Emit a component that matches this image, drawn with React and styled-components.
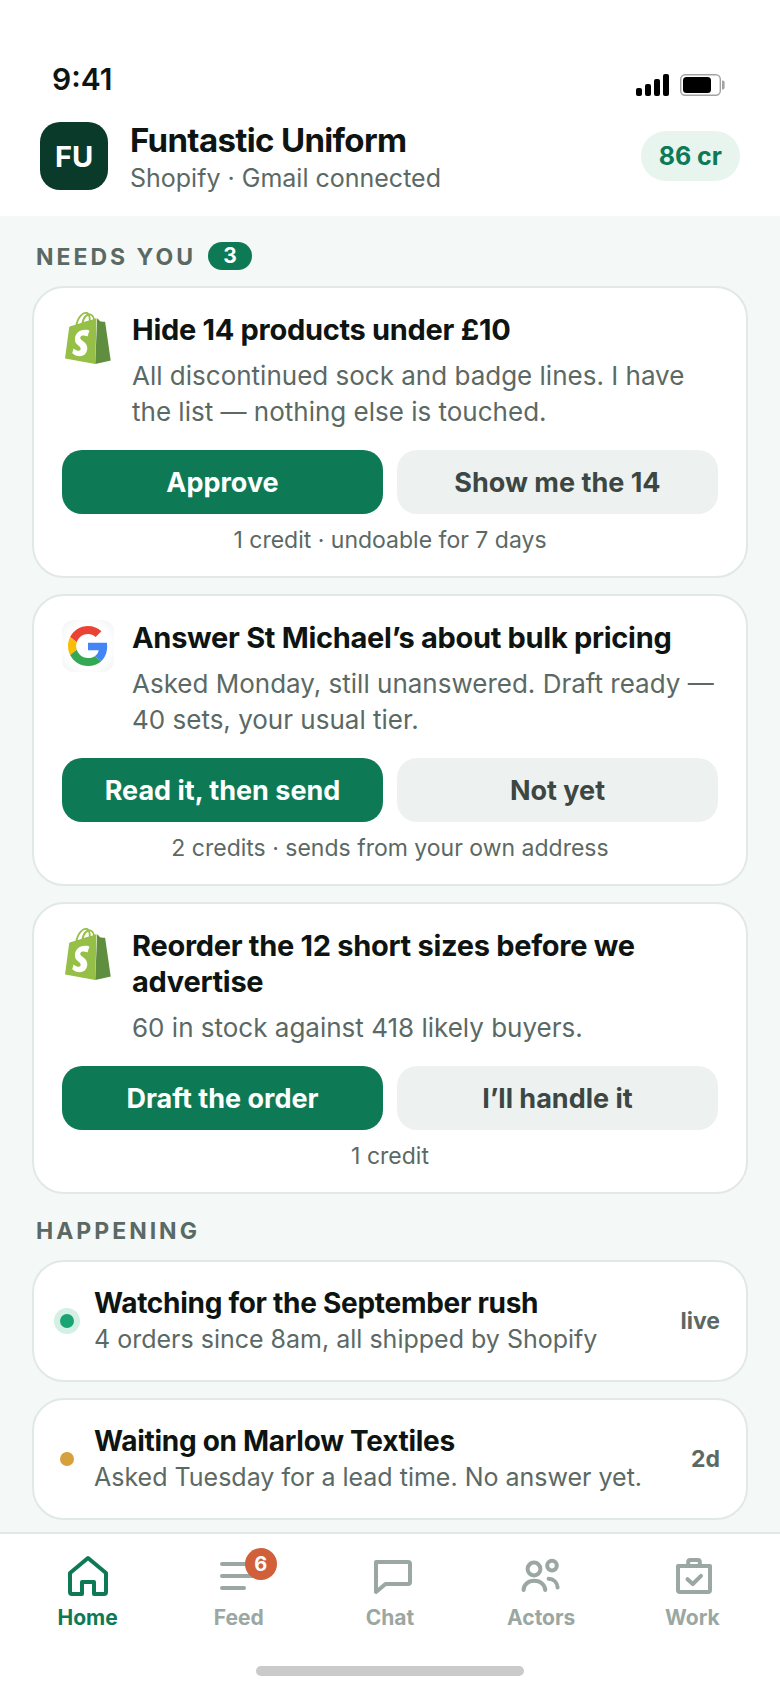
import React from "react";
import styled, { createGlobalStyle, css } from "styled-components";

const needs = [
  {
    id: 1,
    source: "shopify",
    title: "Hide 14 products under £10",
    desc: "All discontinued sock and badge lines. I have the list — nothing else is touched.",
    primary: "Approve",
    secondary: "Show me the 14",
    note: "1 credit · undoable for 7 days",
  },
  {
    id: 2,
    source: "google",
    title: "Answer St Michael’s about bulk pricing",
    desc: "Asked Monday, still unanswered. Draft ready — 40 sets, your usual tier.",
    primary: "Read it, then send",
    secondary: "Not yet",
    note: "2 credits · sends from your own address",
  },
  {
    id: 3,
    source: "shopify",
    title: "Reorder the 12 short sizes before we advertise",
    desc: "60 in stock against 418 likely buyers.",
    primary: "Draft the order",
    secondary: "I’ll handle it",
    note: "1 credit",
  },
];

const happenings = [
  {
    id: 1,
    live: true,
    title: "Watching for the September rush",
    desc: "4 orders since 8am, all shipped by Shopify",
    state: "live",
  },
  {
    id: 2,
    live: false,
    title: "Waiting on Marlow Textiles",
    desc: "Asked Tuesday for a lead time. No answer yet.",
    state: "2d",
  },
];

const tabs = [
  {
    name: "Home",
    active: true,
    icon: (
      <path d="M6 21 24 6l18 15v19a2 2 0 0 1-2 2H30V30H18v12H8a2 2 0 0 1-2-2z" />
    ),
  },
  { name: "Feed", count: 6, icon: <path d="M7 12h34M7 24h34M7 36h22" /> },
  {
    name: "Chat",
    icon: (
      <path d="M10 10h32a2 2 0 0 1 2 2v18a2 2 0 0 1-2 2H19.5L10 40z" />
    ),
  },
  {
    name: "Actors",
    icon: (
      <>
        <circle cx="17" cy="17" r="6.4" />
        <circle cx="35" cy="13.6" r="4.8" />
        <path d="M6.6 38c0-5.2 4.4-9.2 10.6-9.2s11 4 11 9.2M31.6 26.8c5 .2 8.6 3.8 9 8.6" />
      </>
    ),
  },
  {
    name: "Work",
    icon: (
      <>
        <path d="M10 14h32v24a2 2 0 0 1-2 2H12a2 2 0 0 1-2-2z" />
        <path d="M20.2 14v-4a2 2 0 0 1 2-2h7.6a2 2 0 0 1 2 2v4M19.5 27.2l5.3 4.8 8.2-8.2" />
      </>
    ),
  },
];

const ShopifyLogo = () => (
  <svg width="52" height="52" viewBox="0 0 24 24" aria-label="Shopify" role="img">
    <path
      fill="#5e8e3e"
      d="M15.337 23.979l7.216-1.561s-2.604-17.613-2.625-17.73c-.018-.116-.114-.192-.211-.192s-1.929-.136-1.929-.136-1.275-1.274-1.439-1.411c-.045-.037-.075-.057-.121-.074l-.914 21.104z"
    />
    <path
      fill="#95bf47"
      fillRule="evenodd"
      d="M11.71 11.305s-.81-.424-1.774-.424c-1.447 0-1.504.906-1.504 1.141 0 1.232 3.24 1.715 3.24 4.629 0 2.295-1.44 3.76-3.406 3.76-2.354 0-3.54-1.465-3.54-1.465l.646-2.086s1.245 1.066 2.28 1.066c.675 0 .975-.545.975-.932 0-1.619-2.654-1.694-2.654-4.359-.034-2.237 1.571-4.416 4.827-4.416 1.257 0 1.875.361 1.875.361l-.945 2.715zM11.17.83c.136 0 .271.038.405.135-.984.465-2.064 1.639-2.508 3.992-.656.213-1.293.405-1.889.578C7.697 3.75 8.951.84 11.17.84zM12.405 3.779v.135c-.754.232-1.583.484-2.394.736.466-1.777 1.333-2.645 2.085-2.971.193.501.309 1.176.309 2.1zM12.944 1.545c.694.074 1.141.867 1.429 1.755-.349.114-.735.231-1.158.366v-.252c0-.752-.096-1.371-.271-1.871zM15.936 2.834c-.02 0-.06.021-.078.021s-.289.075-.714.21c-.423-1.233-1.176-2.37-2.508-2.37h-.115C12.135.209 11.669 0 11.265 0 8.159 0 6.675 3.877 6.21 5.846c-1.194.365-2.063.636-2.16.674-.675.213-.694.232-.772.87-.075.462-1.83 14.063-1.83 14.063L15.35 24l.586-21.166z"
    />
  </svg>
);

const GoogleLogo = () => (
  <svg width="40" height="40" viewBox="0 0 48 48" aria-label="Google" role="img">
    <path
      fill="#ea4335"
      d="M24 9.5c3.54 0 6.71 1.22 9.21 3.6l6.85-6.85C35.9 2.38 30.47 0 24 0 14.62 0 6.51 5.38 2.56 13.22l7.98 6.19C12.43 13.72 17.74 9.5 24 9.5z"
    />
    <path
      fill="#4285f4"
      d="M46.98 24.55c0-1.57-.15-3.09-.38-4.55H24v9.02h12.94c-.58 2.96-2.26 5.48-4.78 7.18l7.73 6c4.51-4.18 7.09-10.36 7.09-17.65z"
    />
    <path
      fill="#fbbc05"
      d="M10.53 28.59c-.48-1.45-.76-2.99-.76-4.59s.27-3.14.76-4.59l-7.98-6.19C.92 16.46 0 20.12 0 24c0 3.88.92 7.54 2.56 10.78l7.97-6.19z"
    />
    <path
      fill="#34a853"
      d="M24 48c6.48 0 11.93-2.13 15.89-5.81l-7.73-6c-2.15 1.45-4.92 2.3-8.16 2.3-6.26 0-11.57-4.22-13.47-9.91l-7.98 6.19C6.51 42.62 14.62 48 24 48z"
    />
  </svg>
);

const NeedCard = (props) => {
  return (
    <Card>
      <CardTop>
        {props.source === "shopify" ? (
          <ShopifyLogo />
        ) : (
          <GoogleTile>
            <GoogleLogo />
          </GoogleTile>
        )}
        <CardText>
          <CardTitle>{props.title}</CardTitle>
          <CardDesc>{props.desc}</CardDesc>
        </CardText>
      </CardTop>
      <BtnBox>
        <Btn type="button" $primary>{props.primary}</Btn>
        <Btn type="button">{props.secondary}</Btn>
      </BtnBox>
      <Note>{props.note}</Note>
    </Card>
  );
};

const HappeningRow = (props) => {
  return (
    <Row>
      <Dot $live={props.live} />
      <RowText>
        <RowTitle>{props.title}</RowTitle>
        <RowDesc>{props.desc}</RowDesc>
      </RowText>
      <RowState>{props.state}</RowState>
    </Row>
  );
};

const App = () => {
  return (
    <Page>
      <GlobalStyle />
      <StatusBar>
        <Clock>9:41</Clock>
        <svg width="90" height="22" viewBox="0 0 90 22" aria-hidden="true">
          <rect x="0" y="14" width="6" height="8" rx="2" />
          <rect x="9" y="10" width="6" height="12" rx="2" />
          <rect x="18" y="5" width="6" height="17" rx="2" />
          <rect x="27" y="0" width="6" height="22" rx="2" />
          <rect x="44.7" y=".7" width="39.6" height="20.6" rx="4.5" fill="none" stroke="#a3a3a3" strokeWidth="1.4" />
          <rect x="47" y="3" width="28" height="16" rx="3.5" />
          <path d="M86 6.5h.6a2 2 0 0 1 2 2v5a2 2 0 0 1-2 2H86z" fill="#a3a3a3" />
        </svg>
      </StatusBar>
      <Header>
        <Avatar>FU</Avatar>
        <ShopInfo>
          <ShopName>Funtastic Uniform</ShopName>
          <ShopDesc>Shopify · Gmail connected</ShopDesc>
        </ShopInfo>
        <Credits>86 cr</Credits>
      </Header>

      <Main>
        <SectionTitle>
          NEEDS YOU <Count>3</Count>
        </SectionTitle>
        <List>
          {needs.map((n) => (
            <NeedCard key={n.id} {...n} />
          ))}
        </List>
        <SectionTitle>HAPPENING</SectionTitle>
        <List>
          {happenings.map((h) => (
            <HappeningRow key={h.id} {...h} />
          ))}
        </List>
      </Main>

      <TabBar>
        <TabList>
          {tabs.map((t) => (
            <Tab key={t.name} href={`#${t.name.toLowerCase()}`} $active={t.active}>
              <TabIcon>
                <svg width="48" height="48" viewBox="0 0 48 48" aria-hidden="true">
                  {t.icon}
                </svg>
                {t.count && <TabBadge>{t.count}</TabBadge>}
              </TabIcon>
              {t.name}
            </Tab>
          ))}
        </TabList>
        <HomeIndicator />
      </TabBar>
    </Page>
  );
};

export default App;

const GlobalStyle = createGlobalStyle`
  * {
    box-sizing: border-box;
  }
  body {
    margin: 0;
    background-color: #f4f8f7;
    color: #0e1412;
    font-family: Inter, "Liberation Sans", sans-serif;
  }
  h1, h2, h3, p {
    margin: 0;
  }
`;

const cardBox = css`
  background-color: #ffffff;
  border: 2px solid #e1e9e6;
  border-radius: 32px;
`;

const Page = styled.div`
  min-height: 100vh;
  display: flex;
  flex-direction: column;
`;

const StatusBar = styled.div`
  display: flex;
  align-items: flex-end;
  justify-content: space-between;
  padding: 62px 54px 21px 52px;
  background-color: #ffffff;
`;

const Clock = styled.span`
  font-size: 30px;
  line-height: 34px;
  font-weight: 600;
`;

const Header = styled.header`
  display: flex;
  align-items: center;
  gap: 22px;
  padding: 0 40px 21px;
  background-color: #ffffff;
`;

const Avatar = styled.div`
  display: flex;
  align-items: center;
  justify-content: center;
  width: 68px;
  height: 68px;
  border-radius: 20px;
  background-color: #0a3b2a;
  color: #ffffff;
  font-size: 29px;
  font-weight: 700;
`;

const ShopInfo = styled.div`
  flex: 1;
  padding-top: 6px;
`;

const ShopName = styled.h1`
  font-size: 33px;
  line-height: 34px;
  font-weight: 700;
  letter-spacing: -0.02em;
`;

const ShopDesc = styled.p`
  margin-top: 4px;
  font-size: 25px;
  line-height: 34px;
  color: #5b6965;
`;

const Credits = styled.span`
  padding: 10px 18px;
  border-radius: 25px;
  background-color: #e8f4ee;
  color: #0e7a55;
  font-size: 25px;
  line-height: 30px;
  font-weight: 700;
`;

const Main = styled.main`
  flex: 1;
  padding: 4px 32px 12px;
`;

const SectionTitle = styled.h2`
  display: flex;
  align-items: flex-start;
  gap: 12px;
  margin: 22px 4px 14px;
  font-size: 23px;
  line-height: 30px;
  font-weight: 700;
  letter-spacing: 3px;
  color: #5b6965;
`;

const Count = styled.span`
  min-width: 44px;
  border-radius: 14px;
  background-color: #0e7a55;
  color: #ffffff;
  font-size: 21px;
  line-height: 28px;
  text-align: center;
  letter-spacing: normal;
`;

const List = styled.div`
  display: flex;
  flex-direction: column;
  gap: 16px;
`;

const Card = styled.article`
  ${cardBox}
  padding: 24px 28px 22px;
`;

const CardTop = styled.div`
  display: flex;
  align-items: flex-start;
  gap: 18px;

  & > svg {
    flex-shrink: 0;
  }
`;

const GoogleTile = styled.div`
  display: flex;
  align-items: center;
  justify-content: center;
  flex-shrink: 0;
  width: 52px;
  height: 52px;
  border-radius: 12px;
  background: radial-gradient(circle, #ffffff 60%, #eef1f0);
`;

const CardText = styled.div`
  flex: 1;
`;

const CardTitle = styled.h3`
  font-size: 29px;
  line-height: 36px;
  font-weight: 700;
  letter-spacing: -0.01em;
`;

const CardDesc = styled.p`
  margin-top: 10px;
  font-size: 26px;
  line-height: 36px;
  color: #5b6965;
`;

const BtnBox = styled.div`
  display: grid;
  grid-template-columns: 1fr 1fr;
  gap: 14px;
  margin-top: 20px;
`;

const Btn = styled.button`
  height: 64px;
  border: none;
  border-radius: 20px;
  background-color: ${(props) => (props.$primary ? "#0e7a55" : "#edf2f1")};
  color: ${(props) => (props.$primary ? "#ffffff" : "#3c4744")};
  font-family: inherit;
  font-size: 27px;
  font-weight: 700;
  cursor: pointer;
`;

const Note = styled.p`
  margin-top: 12px;
  font-size: 23px;
  line-height: 28px;
  text-align: center;
  color: #5b6965;
`;

const Row = styled.article`
  ${cardBox}
  display: flex;
  align-items: center;
  gap: 20px;
  min-height: 122px;
  padding: 22px 26px;
`;

const Dot = styled.span`
  width: 14px;
  height: 14px;
  border-radius: 50%;
  background-color: ${(props) => (props.$live ? "#1aa374" : "#d6a03c")};
  box-shadow: ${(props) => (props.$live ? "0 0 0 6px #d4efe4" : "none")};
`;

const RowText = styled.div`
  flex: 1;
`;

const RowTitle = styled.h3`
  font-size: 28px;
  line-height: 36px;
  font-weight: 700;
  letter-spacing: -0.01em;
`;

const RowDesc = styled.p`
  font-size: 25px;
  line-height: 36px;
  color: #5b6965;
`;

const RowState = styled.span`
  font-size: 23px;
  font-weight: 700;
  color: #5b6965;
`;

const TabBar = styled.nav`
  padding: 18px 12px 12px;
  border-top: 2px solid #e1e9e6;
  background-color: #ffffff;
`;

const TabList = styled.div`
  display: grid;
  grid-template-columns: repeat(5, 1fr);
`;

const Tab = styled.a`
  display: flex;
  flex-direction: column;
  align-items: center;
  gap: 4px;
  color: ${(props) => (props.$active ? "#0e7a55" : "#9aa7a2")};
  font-size: 21px;
  line-height: 28px;
  font-weight: 700;
  text-decoration: none;

  svg {
    display: block;
    fill: none;
    stroke: currentColor;
    stroke-width: 4;
    stroke-linecap: round;
    stroke-linejoin: round;
  }
`;

const TabIcon = styled.span`
  position: relative;
`;

const TabBadge = styled.span`
  position: absolute;
  top: -4px;
  right: -14px;
  width: 32px;
  height: 32px;
  border-radius: 50%;
  background-color: #d05f3a;
  color: #ffffff;
  font-size: 20px;
  line-height: 33px;
  text-align: center;
`;

const HomeIndicator = styled.div`
  width: 268px;
  height: 10px;
  margin: 34px auto 0;
  border-radius: 5px;
  background-color: #cacaca;
`;
